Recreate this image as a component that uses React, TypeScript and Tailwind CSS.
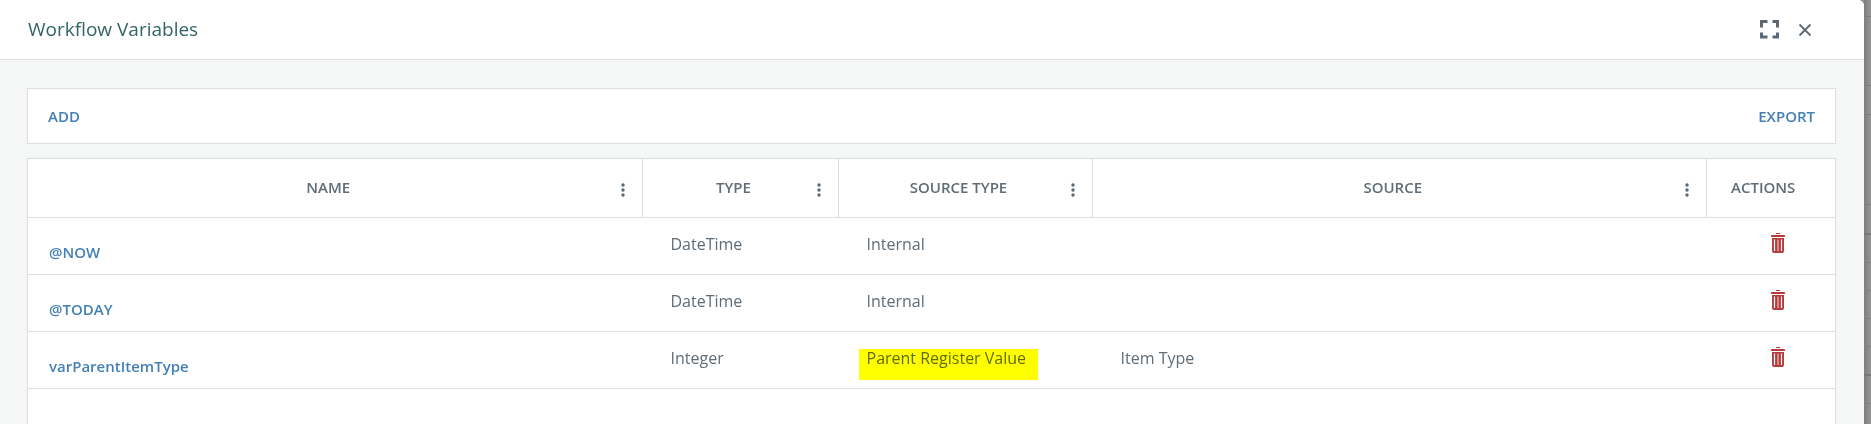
import React from "react";

const variables = [
  { name: "@NOW", type: "DateTime", sourceType: "Internal", source: "", highlight: false },
  { name: "@TODAY", type: "DateTime", sourceType: "Internal", source: "", highlight: false },
  {
    name: "varParentItemType",
    type: "Integer",
    sourceType: "Parent Register Value",
    source: "Item Type",
    highlight: true,
  },
];

const ExpandIcon = () => (
  <svg width="20" height="20" viewBox="0 0 20 20" fill="none" stroke="#5b6975" strokeWidth="3">
    <path d="M1.5 7.5V1.5H7.5M12.5 1.5H17.5V7.5M17.5 12.5V17H12.5M7.5 17H1.5V12.5" />
  </svg>
);

const CloseIcon = () => (
  <svg width="14" height="14" viewBox="0 0 14 14" fill="none" stroke="#5b6975" strokeWidth="1.8">
    <path d="M1.5 1.5L12.5 12.5M12.5 1.5L1.5 12.5" />
  </svg>
);

const DotsIcon = () => (
  <svg width="4" height="14" viewBox="0 0 4 14" fill="#5b6975">
    <circle cx="2" cy="2" r="1.7" />
    <circle cx="2" cy="7" r="1.7" />
    <circle cx="2" cy="12" r="1.7" />
  </svg>
);

const TrashIcon = () => (
  <svg width="14" height="20" viewBox="0 0 14 20">
    <path
      fill="#b53a3a"
      d="M5 0H9V1H5ZM1 2H13Q14 2 14 3V4H0V3Q0 2 1 2ZM1 5H13V18Q13 20 11 20H3Q1 20 1 18Z"
    />
    <path stroke="#fff" strokeWidth="1.2" d="M3.5 6.5V18M10.5 6.5V18" />
    <path stroke="#eec4c4" strokeWidth="1.2" d="M7 6.5V18" />
  </svg>
);

const HeaderCell = ({ label }: { label: string }) => (
  <th className="border-r border-b border-[#dcdede] p-0 font-semibold">
    <div className="flex items-center pr-[17px] pl-2">
      <span className="flex-1 pb-0.5 text-center">{label}</span>
      <button type="button" aria-label={`${label} column menu`} className="pt-1">
        <DotsIcon />
      </button>
    </div>
  </th>
);

const App = () => {
  return (
    <div className="flex min-h-screen bg-[#929292] font-['Open_Sans',sans-serif]">
      <main className="flex flex-1 flex-col overflow-hidden rounded-tr-md bg-[#f5f7f7]">
        <header className="flex h-[60px] items-center justify-between border-b border-[#dcdede] bg-white pr-[52px] pl-7">
          <h1 className="text-[19px] text-[#336565]">Workflow Variables</h1>
          <div className="flex items-center gap-[18px]">
            <button type="button" aria-label="Full screen">
              <ExpandIcon />
            </button>
            <button type="button" aria-label="Close">
              <CloseIcon />
            </button>
          </div>
        </header>

        <div className="flex flex-1 flex-col gap-[14px] pt-7 pr-7 pl-[27px]">
          <div className="flex h-14 items-center justify-between border border-[#dcdede] bg-white px-5 text-[15px] font-semibold text-[#4580b5]">
            <button type="button">ADD</button>
            <button type="button">EXPORT</button>
          </div>

          <div className="flex-1 border border-b-0 border-[#dcdede] bg-white">
            <table className="w-full table-fixed border-separate border-spacing-0 text-left text-[#5f6d78]">
              <colgroup>
                <col />
                <col className="w-[196px]" />
                <col className="w-[254px]" />
                <col />
                <col className="w-[128px]" />
              </colgroup>
              <thead>
                <tr className="h-[59px] text-[15px]">
                  <HeaderCell label="NAME" />
                  <HeaderCell label="TYPE" />
                  <HeaderCell label="SOURCE TYPE" />
                  <HeaderCell label="SOURCE" />
                  <th className="border-b border-[#dcdede] p-0 pb-0.5 pl-6 font-semibold">
                    ACTIONS
                  </th>
                </tr>
              </thead>
              <tbody>
                {variables.map((item) => (
                  <tr key={item.name} className="h-[57px] align-top text-[16px] leading-6">
                    <td className="border-b border-[#dcdede] p-0 pt-[22px] pl-[21px]">
                      <a href="#" className="block text-[15px] font-semibold text-[#4580b5]">
                        {item.name}
                      </a>
                    </td>
                    <td className="border-b border-[#dcdede] p-0 pt-[14px] pl-7">{item.type}</td>
                    <td className="border-b border-[#dcdede] p-0 pt-[14px] pl-7">
                      <span className="relative inline-block">
                        {item.sourceType}
                        {item.highlight && (
                          <span className="absolute top-[3px] -right-3 -left-2 h-[31px] bg-[#ffff00] mix-blend-multiply" />
                        )}
                      </span>
                    </td>
                    <td className="border-b border-[#dcdede] p-0 pt-[14px] pl-7">{item.source}</td>
                    <td className="border-b border-[#dcdede] p-0 pt-[15px] pl-16">
                      <button type="button" aria-label={`Delete ${item.name}`} className="block">
                        <TrashIcon />
                      </button>
                    </td>
                  </tr>
                ))}
              </tbody>
            </table>
          </div>
        </div>
      </main>

      {/* edge of the dimmed page behind the dialog */}
      <div className="flex w-[7px] flex-col bg-linear-to-r from-[#7f7f7f] to-[#959593]">
        <div className="h-[17px] border-b border-[#7c7c7c]" />
        <div className="h-[69px] border-b border-[#7c7c7c]" />
        <div className="h-[29px] border-b border-[#7c7c7c]" />
        <div className="h-[90px] border-b border-[#7c7c7c]" />
        <div className="h-[30px] border-b-2 border-[#777777]" />
        <div className="h-[28px] border-b border-[#808080]" />
        <div className="h-[28px] border-b border-[#808080]" />
        <div className="h-[28px] border-b border-[#808080]" />
        <div className="h-[28px] border-b border-[#808080]" />
        <div className="h-[29px] border-b-2 border-[#777777]" />
        <div className="h-[28px] border-b border-[#808080]" />
      </div>
    </div>
  );
};

export default App;
